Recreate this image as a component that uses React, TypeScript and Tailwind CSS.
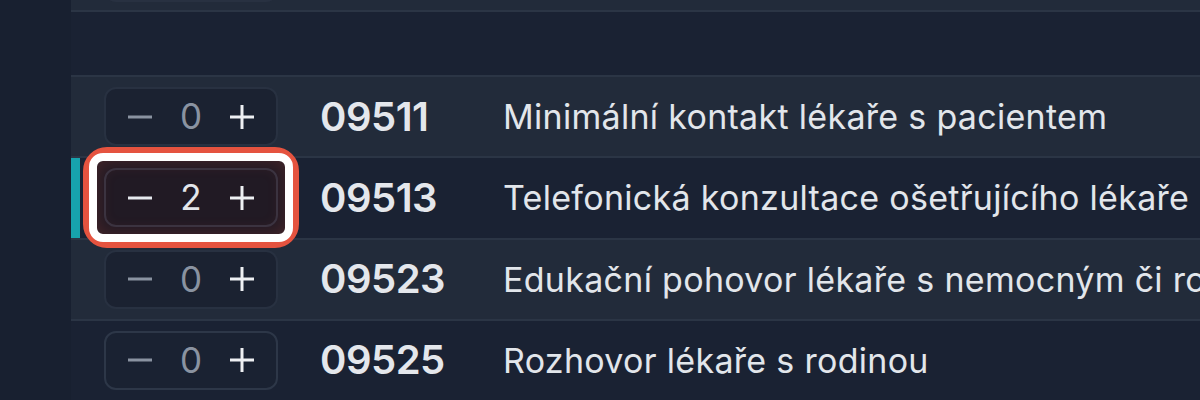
import React from "react";

type Item = {
  code: string;
  label: string;
  count: number;
  shaded: boolean;
  selected?: boolean;
};

const ITEMS: Item[] = [
  { code: "09511", label: "Minimální kontakt lékaře s pacientem", count: 0, shaded: true },
  {
    code: "09513",
    label: "Telefonická konzultace ošetřujícího lékaře pacientem nebo zákonným zástupcem pacienta",
    count: 2,
    shaded: false,
    selected: true,
  },
  { code: "09523", label: "Edukační pohovor lékaře s nemocným či rodinou", count: 0, shaded: true },
  { code: "09525", label: "Rozhovor lékaře s rodinou", count: 0, shaded: false },
];

const font = { fontFamily: "Inter, 'Noto Sans', sans-serif" };

function MinusIcon({ active }: { active: boolean }) {
  return (
    <svg width="24" height="24" viewBox="0 0 24 24" aria-hidden="true">
      <path d="M0 12h24" stroke={active ? "#e6e9ee" : "#8a93a1"} strokeWidth="3" />
    </svg>
  );
}

function PlusIcon() {
  return (
    <svg width="24" height="24" viewBox="0 0 24 24" aria-hidden="true">
      <path d="M0 12h24M12 0v24" stroke="#eef0f3" strokeWidth="3" />
    </svg>
  );
}

function Stepper({ count, shaded, selected }: { count: number; shaded: boolean; selected?: boolean }) {
  const box = selected
    ? "border-[#3b3340] bg-transparent"
    : shaded
    ? "border-[#283141] bg-[#1b2231]"
    : "border-[#2d3748] bg-[#1a2232]";
  return (
    <div className="relative shrink-0">
      {selected && (
        // annotation ring drawn over the row
        <div className="absolute -inset-[21px] rounded-[24px] border-[6px] border-[#e5533f]">
          <div className="h-full w-full rounded-[14px] border-[8px] border-white bg-[#211a24] shadow-[inset_0_0_18px_rgba(229,83,63,0.2)]" />
        </div>
      )}
      <div
        className={`relative flex h-[59px] w-[174px] items-center justify-between rounded-[12px] border-2 px-[22px] ${box}`}
      >
        <MinusIcon active={count > 0} />
        <span
          className={`text-[35px] leading-none ${count > 0 ? "text-[#e3e6eb]" : "text-[#8a93a1]"}`}
          style={font}
        >
          {count}
        </span>
        <PlusIcon />
      </div>
    </div>
  );
}

function Row({ item }: { item: Item }) {
  return (
    <div
      className={`flex h-[82px] items-center border-t-2 border-[#2b3545] ${
        item.shaded ? "bg-[#222b3a]" : "bg-[#1a2233]"
      }`}
    >
      <div className={`w-[9px] self-stretch ${item.selected ? "bg-[#17a3ad]" : ""}`} />
      <div className="ml-[24px]">
        <Stepper count={item.count} shaded={item.shaded} selected={item.selected} />
      </div>
      <div
        className="ml-[42px] w-[183px] shrink-0 text-[40px] font-semibold tracking-[-0.5px] text-[#e4e7ec]"
        style={font}
      >
        {item.code}
      </div>
      <div
        className="min-w-0 flex-1 overflow-hidden whitespace-nowrap text-[34px] tracking-[0.3px] text-[#e2e6eb]"
        style={font}
      >
        {item.label}
      </div>
    </div>
  );
}

export default function App() {
  return (
    <div className="flex h-[400px] w-[1200px] overflow-hidden bg-[#1a2233]">
      <aside className="w-[71px] shrink-0 bg-[#182030]" />
      <main className="flex min-w-0 flex-1 flex-col">
        {/* previous row, scrolled almost out of view */}
        <div className="flex h-[12px] shrink-0 items-end overflow-hidden border-b-2 border-[#2b3545] bg-[#222b3a] pl-[33px]">
          <div className="mb-[8px] h-[59px] w-[174px] shrink-0 rounded-[12px] border-2 border-[#283141] bg-[#1b2231]" />
        </div>
        <div className="h-[63px] shrink-0" />
        {ITEMS.map((it) => (
          <Row key={it.code} item={it} />
        ))}
      </main>
    </div>
  );
}
